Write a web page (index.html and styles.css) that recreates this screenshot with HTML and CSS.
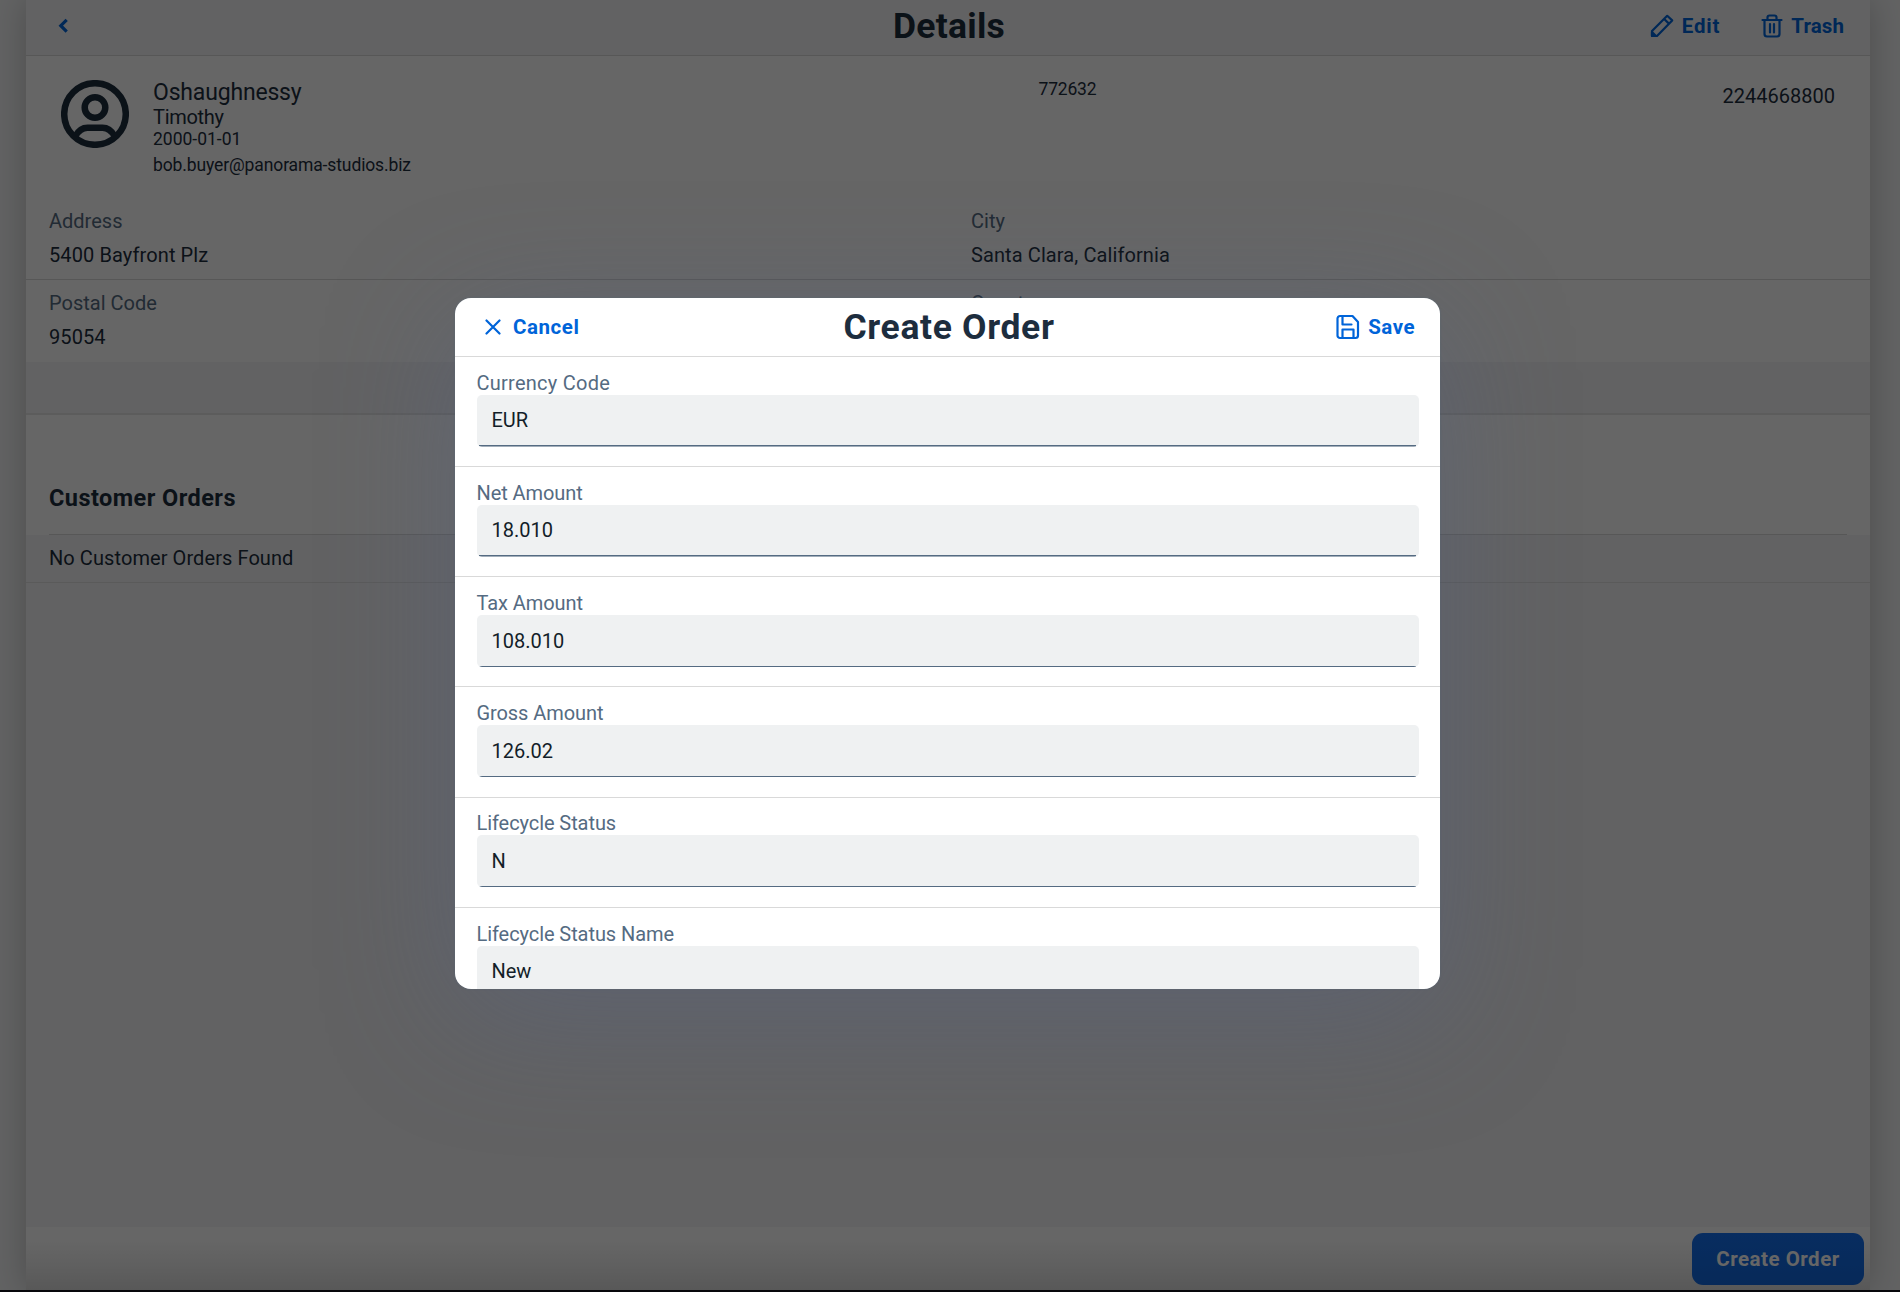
FILE: index.html
```html
<!DOCTYPE html>
<html lang="en">
<head>
<meta charset="utf-8">
<title>Details</title>
<link rel="stylesheet" href="styles.css">
</head>
<body>
<div class="page">
  <header class="bar">
    <button class="btn back" aria-label="Back"><svg width="11" height="16" viewBox="0 0 11 16"><path d="M8.700 1.800 2.800 7.700l5.900 5.900"/></svg></button>
    <h1 class="title">Details</h1>
    <div class="actions">
      <button class="btn edit"><svg class="ico" width="24" height="24" viewBox="0 0 24 24"><path d="M2 22v-5L17.200 1.800l5 4.600L7 22zM14.200 5l4.700 4.600"/><path class="tip" d="M2 22v-4l4 4z"/></svg>Edit</button>
      <button class="btn trash"><svg class="ico" width="22" height="24" viewBox="0 0 22 24"><path d="M1.500 6h19M6.500 6V3.500a2 2 0 0 1 2-2h5a2 2 0 0 1 2 2V6M3.500 6v14a2.500 2.500 0 0 0 2.500 2.500h10a2.500 2.500 0 0 0 2.500-2.500V6M9 10v8.500M13 10v8.500"/></svg>Trash</button>
    </div>
  </header>
  <section class="profile">
    <svg class="avatar" width="68" height="68" viewBox="0 0 68 68"><circle cx="34" cy="34" r="30.800"/><circle cx="34" cy="27.500" r="10.300"/><path d="M14.500 56c3-5.500 7-8.300 12-8.300h15c5 0 9 2.800 12 8.300"/></svg>
    <div class="who">
      <div class="name">Oshaughnessy</div>
      <div class="first">Timothy</div>
      <div class="born">2000-01-01</div>
      <div class="mail">bob.buyer@panorama-studios.biz</div>
    </div>
    <div class="number">772632</div>
    <div class="phone">2244668800</div>
  </section>
  <section class="facts">
    <div class="fact"><label>Address</label><p>5400 Bayfront Plz</p></div>
    <div class="fact"><label>City</label><p>Santa Clara, California</p></div>
    <div class="fact"><label>Postal Code</label><p>95054</p></div>
    <div class="fact"><label>Country</label></div>
  </section>
  <div class="gap"></div>
  <section class="orders">
    <h2>Customer Orders</h2>
    <p class="empty">No Customer Orders Found</p>
  </section>
  <footer class="foot"><button class="create">Create Order</button></footer>
</div>
<div class="overlay">
  <div class="dialog">
    <header class="dbar">
      <button class="btn cancel"><svg class="ico" width="16" height="16" viewBox="0 0 16 16"><path d="M1.500 1.500l13 13M14.500 1.500l-13 13"/></svg>Cancel</button>
      <h1 class="title wide">Create Order</h1>
      <button class="btn save"><svg class="ico" width="24" height="28" viewBox="0 0 24 28"><path d="M4 3h12.500L22 9v13.500a2.500 2.500 0 0 1-2.500 2.500H4a2.500 2.500 0 0 1-2.500-2.500v-17A2.500 2.500 0 0 1 4 3zM6.500 3v8.500h9M6.500 25v-8.500h11V25"/></svg>Save</button>
    </header>
    <div class="field"><label class="loose">Currency Code</label><div class="input">EUR</div></div>
    <div class="field"><label>Net Amount</label><div class="input">18.010</div></div>
    <div class="field"><label>Tax Amount</label><div class="input">108.010</div></div>
    <div class="field"><label>Gross Amount</label><div class="input">126.02</div></div>
    <div class="field"><label>Lifecycle Status</label><div class="input">N</div></div>
    <div class="field"><label>Lifecycle Status Name</label><div class="input">New</div></div>
  </div>
</div>
</body>
</html>
```
FILE: styles.css
```css
* { box-sizing: border-box; margin: 0; padding: 0; }
body {
  height: 1292px;
  overflow: hidden;
  background: #f5f6f7;
  font: 20px/24px Roboto, "Liberation Sans", sans-serif;
  color: #1d2d3e;
}
.page {
  display: flex;
  flex-direction: column;
  width: 1844px;
  height: 1290px;
  margin-left: 26px;
  background: #f5f6f7;
  box-shadow: 0 0 32px rgba(0, 0, 0, .22);
}
button { border: 0; background: none; font: inherit; color: inherit; }
.btn { display: flex; align-items: center; gap: 8px; color: #0064d9; font-size: 20.5px; font-weight: 700; }
.ico, .back svg { fill: none; stroke: #0064d9; stroke-width: 2.2; stroke-linejoin: round; stroke-linecap: round; }
.tip { fill: #0064d9; }
.title { font-size: 35.5px; line-height: 40px; font-weight: 700; text-align: center; letter-spacing: .25px; }
.bar .title { margin-left: -4px; }
.wide { margin-left: -2px; letter-spacing: .65px; }
.bar {
  display: grid;
  grid-template-columns: 1fr auto 1fr;
  align-items: center;
  height: 56px;
  padding: 0 26px 4px 32px;
  border-bottom: 1px solid #d9d9d9;
}
.back svg { stroke-width: 3.2; stroke-linecap: butt; stroke-linejoin: miter; }
.actions { display: flex; justify-content: flex-end; gap: 41px; }
.edit { letter-spacing: .8px; }
.trash { letter-spacing: .1px; }

.profile {
  display: flex;
  height: 144px;
  padding-left: 35px;
  background: #fff;
}
.avatar { margin-top: 24px; fill: none; stroke: #1d2d3e; stroke-width: 6.5; }
.who { width: 909.5px; padding: 23px 0 0 24px; }
.name { font-size: 23px; line-height: 28px; letter-spacing: -.18px; }
.first { margin-top: -2px; line-height: 24px; letter-spacing: -.3px; }
.born { font-size: 17.5px; line-height: 20px; }
.mail { margin-top: 5px; font-size: 17.5px; line-height: 22px; letter-spacing: -.12px; }
.number { width: 400px; padding-top: 21px; font-size: 17.5px; letter-spacing: -.2px; }
.phone { margin-left: auto; padding: 28px 35px 0 0; }

.facts { display: grid; grid-template-columns: 922px 922px; background: #fff; }
.fact { height: 82px; padding: 11px 23px 0; }
.fact:nth-child(-n+2) { height: 80px; padding-top: 9px; border-bottom: 1px solid #d9d9d9; }
.fact label { display: block; color: #556b82; }
.fact p { margin-top: 10px; letter-spacing: .1px; }
.gap { height: 53px; border-bottom: 2px solid #e5e5e5; }
.orders h2 {
  height: 120px;
  padding: 69px 0 0 23px;
  font-size: 23.5px;
  line-height: 28px;
  letter-spacing: .45px;
  background: linear-gradient(#d9d9d9, #d9d9d9) 23px 119px / 1798px 1px no-repeat #fff;
}
.empty { height: 48px; padding: 11px 23px; border-bottom: 1px solid #e0e0e0; letter-spacing: .08px; }
.foot {
  display: flex;
  justify-content: flex-end;
  height: 63px;
  margin-top: auto;
  padding: 6px 6px 0;
  background: linear-gradient(#fff 20%, #f0f0f0 60%, #dcdcdc);
}
.create {
  width: 172px;
  height: 52px;
  border-radius: 11px;
  background: linear-gradient(#1470f0, #1268de);
  color: #fff;
  font-size: 20.5px;
  font-weight: 700;
  letter-spacing: .5px;
}

.overlay {
  position: absolute;
  inset: 0;
  height: 1292px;
  overflow: hidden;
  padding: 298px 0 0 455px;
  background: rgba(0, 0, 0, .6);
  border-bottom: 2px solid #08080c;
}
.dialog {
  width: 985px;
  height: 691px;
  overflow: hidden;
  border-radius: 16px;
  background: #fff;
  box-shadow: 0 0 2px rgba(85, 107, 130, .6), 0 26px 130px rgba(85, 100, 135, .36);
}
.dbar {
  display: grid;
  grid-template-columns: 1fr auto 1fr;
  align-items: center;
  height: 59px;
  padding: 0 25px 0 30px;
  border-bottom: 1px solid #d9d9d9;
}
.dbar .cancel { gap: 12px; letter-spacing: .55px; }
.dbar .save { justify-self: end; gap: 8px; letter-spacing: .5px; }
.dbar .btn { padding-bottom: 1px; }
.field { height: 110.15px; padding: 13.800px 21.500px 0; border-bottom: 1px solid #d9d9d9; }
.field label { display: block; height: 24px; color: #556b82; letter-spacing: -.08px; }
.field .loose { letter-spacing: .25px; }
.input {
  height: 52px;
  padding: 13.500px 15px 12px;
  border-radius: 5px;
  background: linear-gradient(#556b82, #556b82) 50% 100% / calc(100% - 5px) 1.500px no-repeat #eff1f2;
  color: #131e29;
}
```
